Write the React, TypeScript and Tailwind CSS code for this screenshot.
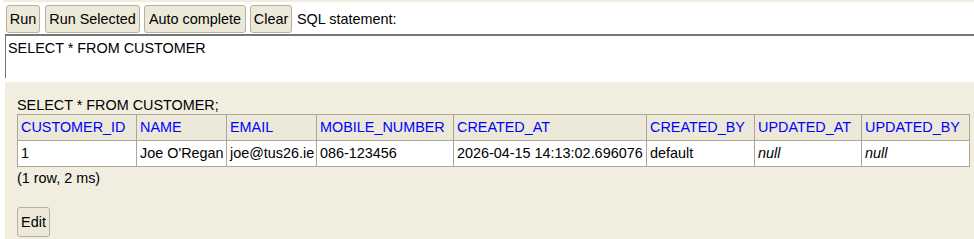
const columns = [
  { name: "CUSTOMER_ID", w: 119 },
  { name: "NAME", w: 90 },
  { name: "EMAIL", w: 90 },
  { name: "MOBILE_NUMBER", w: 137 },
  { name: "CREATED_AT", w: 193 },
  { name: "CREATED_BY", w: 108 },
  { name: "UPDATED_AT", w: 107 },
  { name: "UPDATED_BY", w: 108 },
];

const row: { v: string; nil?: boolean }[] = [
  { v: "1" },
  { v: "Joe O'Regan" },
  { v: "joe@tus26.ie" },
  { v: "086-123456" },
  { v: "2026-04-15 14:13:02.696076" },
  { v: "default" },
  { v: "null", nil: true },
  { v: "null", nil: true },
];

function ToolButton({ label, w }: { label: string; w: string }) {
  return (
    <button
      type="button"
      className={`${w} h-[28px] shrink-0 rounded-[3px] border border-[#b5b1a0] bg-[#ece9d8] text-[14.4px] leading-none text-black`}
    >
      {label}
    </button>
  );
}

export default function App() {
  return (
    <div className="w-[974px] h-[239px] overflow-hidden bg-white text-[14.4px] text-black font-['Liberation_Sans',Arial,sans-serif]">
      {/* query frame */}
      <div className="ml-[3px] h-[2px] bg-[#f1eee0]" />
      <div className="flex items-center pl-[6px] pt-[3px]">
        <ToolButton label="Run" w="w-[34px]" />
        <div className="w-[5px]" />
        <ToolButton label="Run Selected" w="w-[95px]" />
        <div className="w-[4px]" />
        <ToolButton label="Auto complete" w="w-[102px]" />
        <div className="w-[4px]" />
        <ToolButton label="Clear" w="w-[42px]" />
        <span className="ml-[5px] leading-none">SQL statement:</span>
      </div>
      <div className="mt-[1px] ml-[5px] h-[44px] border-t-2 border-l border-[#767676] pl-[2px] pt-[4px] leading-[16px]">
        SELECT * FROM CUSTOMER
      </div>
      <div className="h-[4px]" />

      {/* result frame */}
      <div className="ml-[5px] h-[157px] bg-[#f1eee0] pl-[12px] pt-[15px]">
        <div className="leading-[16px] mb-[1px]">SELECT * FROM CUSTOMER;</div>
        <table className="w-[952px] border-collapse table-fixed">
          <colgroup>
            {columns.map((c) => (
              <col key={c.name} style={{ width: c.w }} />
            ))}
          </colgroup>
          <thead>
            <tr>
              {columns.map((c) => (
                <th
                  key={c.name}
                  className="h-[26px] border border-[#aca899] bg-[#ece9d8] px-[3px] py-0 text-left font-normal text-[#0000ff] whitespace-nowrap overflow-hidden"
                >
                  {c.name}
                </th>
              ))}
            </tr>
          </thead>
          <tbody>
            <tr>
              {row.map((c, i) => (
                <td
                  key={i}
                  className={`h-[26px] border border-[#aca899] bg-white px-[3px] py-0 whitespace-nowrap overflow-hidden ${c.nil ? "italic" : ""}`}
                >
                  {c.v}
                </td>
              ))}
            </tr>
          </tbody>
        </table>
        <div className="mt-[3px] leading-[16px]">(1 row, 2 ms)</div>
        <button
          type="button"
          className="mt-[21px] h-[30px] w-[33px] rounded-[3px] border border-[#b5b1a0] bg-[#ece9d8] text-[14.4px] leading-none"
        >
          Edit
        </button>
      </div>
    </div>
  );
}
